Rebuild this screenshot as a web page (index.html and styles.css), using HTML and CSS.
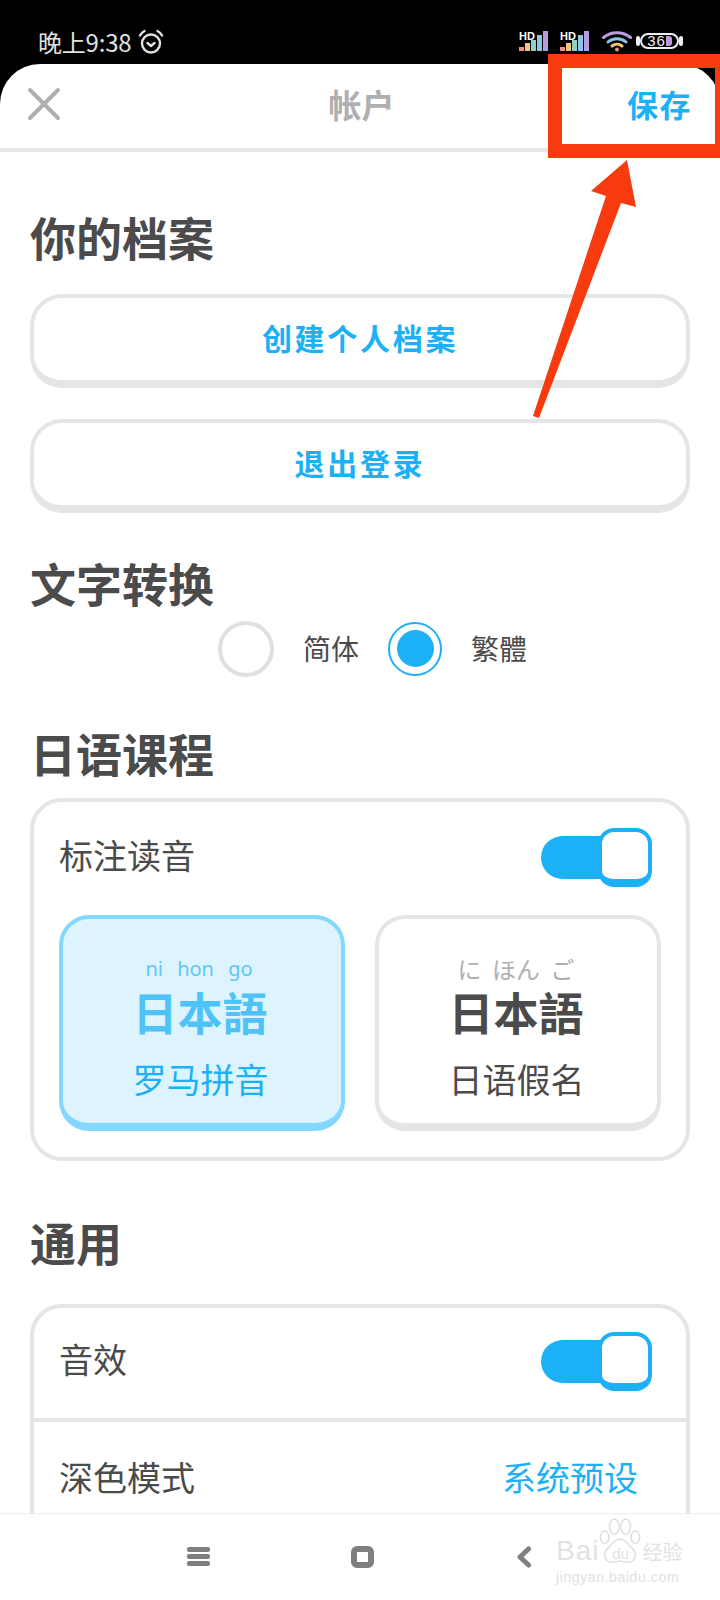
FILE: index.html
```html
<!DOCTYPE html>
<html lang="zh-CN">
<head>
<meta charset="utf-8">
<title>帐户</title>
<link rel="stylesheet" href="styles.css">
</head>
<body>
<div class="phone">
  <div class="statusbar">
    <div class="status-left">
      <span class="clock">晚上9:38</span>
      <svg class="alarm" width="26" height="26" viewBox="0 0 26 26" fill="none" stroke="#e0e0e0" stroke-width="2.4" stroke-linecap="round" stroke-linejoin="round"><circle cx="13" cy="14.5" r="9"/><path d="M9.5 14l3.5 3 3.5-3M2 6.5C3 4.500 4.500 3 6.500 2M24 6.500C23 4.500 21.500 3 19.500 2"/></svg>
    </div>
    <div class="status-right">
      <div class="signal">
        <span class="hd">HD</span>
        <svg width="30" height="22" viewBox="0 0 30 22"><rect x="0" y="17" width="5" height="4" fill="#f0937a"/><rect x="6" y="13" width="5" height="8" fill="#f3c27e"/><rect x="12" y="10" width="5" height="11" fill="#8fd0c0"/><rect x="18" y="5" width="5" height="16" fill="#8ec5e4"/><rect x="24" y="1" width="5" height="20" fill="#b79ddf"/></svg>
      </div>
      <div class="signal">
        <span class="hd">HD</span>
        <svg width="30" height="22" viewBox="0 0 30 22"><rect x="0" y="17" width="5" height="4" fill="#f0937a"/><rect x="6" y="13" width="5" height="8" fill="#f3c27e"/><rect x="12" y="10" width="5" height="11" fill="#8fd0c0"/><rect x="18" y="5" width="5" height="16" fill="#8ec5e4"/><rect x="24" y="1" width="5" height="20" fill="#b79ddf"/></svg>
      </div>
      <svg class="wifi" width="30" height="22" viewBox="0 0 30 22" fill="none" stroke-width="3" stroke-linecap="round"><path d="M1.500 7.500C9 1 21 1 28.500 7.500" stroke="#b79ddf"/><path d="M6 12C11 7.500 19 7.500 24 12" stroke="#8ec5e4"/><path d="M10 16c3-2.500 7-2.500 10 0" stroke="#f3c27e"/><circle cx="15" cy="19.500" r="2" fill="#f0937a" stroke="none"/></svg>
      <div class="battery">
        <span class="batt-nub"></span>
        <div class="batt-body"><span class="batt-num">36</span><span class="batt-level"></span></div>
        <span class="batt-nub"></span>
      </div>
    </div>
  </div>

  <div class="sheet">
    <header class="topbar">
      <svg class="close" width="34" height="34" viewBox="0 0 34 34" stroke="#afafaf" stroke-width="4" stroke-linecap="round"><path d="M3 3l28 28M31 3L3 31"/></svg>
      <div class="topbar-title">帐户</div>
      <div class="save">保存</div>
    </header>

    <main class="content">
      <h2 class="heading heading-first">你的档案</h2>
      <button class="btn">创建个人档案</button>
      <button class="btn btn-next">退出登录</button>

      <h2 class="heading heading-convert">文字转换</h2>
      <div class="radios">
        <span class="radio"></span>
        <span class="radio-text">简体</span>
        <span class="radio radio-on"><span class="radio-dot"></span></span>
        <span class="radio-text">繁體</span>
      </div>

      <h2 class="heading heading-course">日语课程</h2>
      <section class="card card-course">
        <div class="row">
          <span class="row-label">标注读音</span>
          <div class="toggle"><span class="toggle-track"></span><span class="toggle-knob"></span></div>
        </div>
        <div class="tiles">
          <div class="tile tile-on">
            <div class="ruby ruby-latin">ni hon go</div>
            <div class="word">日本語</div>
            <div class="tile-label">罗马拼音</div>
          </div>
          <div class="tile">
            <div class="ruby">に ほん ご</div>
            <div class="word">日本語</div>
            <div class="tile-label">日语假名</div>
          </div>
        </div>
      </section>

      <h2 class="heading heading-general">通用</h2>
      <section class="card card-open">
        <div class="row row-divided">
          <span class="row-label">音效</span>
          <div class="toggle"><span class="toggle-track"></span><span class="toggle-knob"></span></div>
        </div>
        <div class="row row-last">
          <span class="row-label">深色模式</span>
          <span class="row-value">系统预设</span>
        </div>
      </section>
    </main>
  </div>

  <nav class="navbar">
    <div class="nav-menu"><span></span><span></span><span></span></div>
    <div class="nav-home"></div>
    <svg class="nav-back" width="16" height="22" viewBox="0 0 16 22" fill="none" stroke="#7f7f7f" stroke-width="5" stroke-linecap="round" stroke-linejoin="round"><path d="M12.500 3L4 11l8.500 8"/></svg>
  </nav>

  <div class="watermark">
    <div class="wm-top">
      <span class="wm-brand">Bai</span>
      <div class="wm-logo">
        <svg class="wm-paw" width="42" height="50" viewBox="0 0 44 50" fill="none" stroke="#dddddd" stroke-width="1.500"><ellipse cx="16" cy="10" rx="5" ry="8"/><ellipse cx="28" cy="10" rx="5" ry="8"/><ellipse cx="6" cy="21" rx="4.500" ry="6.500"/><ellipse cx="38" cy="21" rx="4.500" ry="6.500"/><path d="M22 23c-7 0-8 6-13 10-6 5-2 15 5 14 4 0 6-1 8-1s4 1 8 1c7 1 11-9 5-14-5-4-6-10-13-10z"/></svg>
        <span class="wm-du">du</span>
      </div>
      <span class="wm-cn">经验</span>
    </div>
    <div class="wm-url">jingyan.baidu.com</div>
  </div>

  <div class="mark-box"></div>
  <svg class="mark-arrow" width="720" height="1600" viewBox="0 0 720 1600"><polygon points="627,160 636,207 621,203 539,418 533,416 606,196 591,191" fill="#f83a0f"/></svg>
</div>
</body>
</html>
```

FILE: styles.css
```css
* { box-sizing: border-box; }
html, body { margin: 0; padding: 0; background: #fff; }
body { font-family: "Noto Sans CJK SC", "Noto Sans", sans-serif; color: #4b4b4b; }

.phone { position: relative; width: 720px; height: 1600px; overflow: hidden; background: #000; display: flex; flex-direction: column; }

/* status bar */
.statusbar { height: 64px; flex: none; display: flex; justify-content: space-between; align-items: flex-start; padding: 29px 37px 0 38px; }
.status-left { display: flex; align-items: center; gap: 7px; }
.clock { color: #e0e0e0; font-size: 24px; line-height: 26px; letter-spacing: -0.2px; }
.status-right { display: flex; align-items: flex-start; gap: 10px; margin-top: 1px; }
.signal { position: relative; width: 31px; height: 22px; }
.hd { position: absolute; left: 0; top: 1px; color: #fff; font: 700 11px/11px "Liberation Sans", sans-serif; }
.wifi { margin-left: 1px; }
.battery { display: flex; align-items: center; margin: 3px 0 0 -6px; }
.batt-nub { width: 4px; height: 10px; background: #eee; border-radius: 2px; }
.batt-body { width: 39px; height: 16px; border: 2px solid #eee; border-radius: 8px; display: flex; align-items: center; justify-content: center; }
.batt-num { color: #eee; font: 400 15px/14px "Liberation Sans", sans-serif; letter-spacing: 1px; }
.batt-level { width: 6px; height: 10px; background: #b79ddf; border-radius: 0 3px 3px 0; }

/* sheet */
.sheet { flex: 1; min-height: 0; overflow: hidden; background: #fff; border-radius: 40px 40px 0 0; }
.topbar { height: 88px; border-bottom: 4px solid #e5e5e5; display: grid; grid-template-columns: 1fr auto 1fr; align-items: center; padding: 0 30px 4px 27px; }
.close { display: block; }
.topbar-title { color: #afafaf; font-size: 33px; font-weight: 700; line-height: 44px; padding-left: 6px; }
.save { justify-self: end; color: #1cb0f6; font-size: 31px; font-weight: 700; line-height: 44px; letter-spacing: 1.500px; margin-right: -2px; }

.content { padding: 0 30px; }
.heading { margin: 0; font-size: 46px; line-height: 52px; font-weight: 700; color: #4b4b4b; }
.heading-first { margin-top: 58px; }
.heading-convert { margin-top: 43px; }
.heading-course { margin-top: 49px; }
.heading-general { margin-top: 54px; }

.btn { display: block; width: 100%; height: 94px; margin-top: 32px; background: #fff; border: 4px solid #e5e5e5; border-bottom-width: 8px; border-radius: 32px; color: #1cb0f6; font-family: inherit; font-size: 30px; font-weight: 700; letter-spacing: 2.700px; padding: 0 0 4px; }
.btn-next { margin-top: 31px; }

/* radios */
.radios { display: flex; align-items: center; gap: 29px; margin: 12px 0 0 188px; height: 57px; }
.radio { width: 56px; height: 56px; flex: none; border: 4px solid #e0e0e0; border-radius: 50%; }
.radio-on { width: 54px; height: 54px; border: 2.500px solid #1cb0f6; display: flex; align-items: center; justify-content: center; }
.radio-dot { width: 37px; height: 37px; border-radius: 50%; background: #1cb0f6; }
.radio-text { font-size: 28px; line-height: 40px; margin-bottom: 2px; }

/* cards */
.card { border: 4px solid #e5e5e5; border-radius: 32px; margin-top: 37px; }
.card-course { margin-top: 20px; padding-bottom: 26px; }
.card-open { padding-bottom: 60px; }
.row { height: 110px; display: flex; justify-content: space-between; align-items: center; padding: 0 34px 0 25px; }
.row-divided { border-bottom: 4px solid #e5e5e5; height: 114px; padding-bottom: 4px; }
.row-last { height: 112px; padding-top: 2px; }
.row-label { font-size: 34px; line-height: 46px; margin-bottom: 4px; }
.row-value { font-size: 34px; line-height: 46px; color: #1cb0f6; margin: 0 14px 4px 0; }

.toggle { display: flex; align-items: flex-start; width: 111px; height: 59px; }
.toggle-track { width: 72px; height: 43px; margin-top: 8px; margin-right: -15px; background: #1cb0f6; border-radius: 22px 0 0 22px; }
.toggle-knob { width: 54px; height: 59px; background: #fff; border: 4px solid #1cb0f6; border-bottom-width: 8px; border-radius: 16px; position: relative; }

/* tiles */
.tiles { display: grid; grid-template-columns: 286px 286px; gap: 30px; padding: 3px 25px 0; }
.tile { height: 216px; border: 4px solid #e5e5e5; border-bottom-width: 8px; border-radius: 30px; padding-top: 35px; text-align: center; background: #fff; }
.tile-on { background: #ddf4ff; border-color: #84d8ff; }
.ruby { font-size: 24px; line-height: 30px; color: #afafaf; word-spacing: 5px; padding-right: 4px; }
.ruby-latin { font-family: "Noto Sans", sans-serif; font-size: 20px; color: #5fc7f5; word-spacing: 9px; padding-right: 6px; }
.word { margin-top: 0; font-size: 45px; line-height: 56px; font-weight: 700; color: #4b4b4b; padding-right: 4px; }
.tile-on .word { color: #4fc3f7; }
.tile-label { margin-top: 16px; font-size: 34px; line-height: 46px; color: #4b4b4b; padding-right: 3px; }
.tile-on .tile-label { color: #1cb0f6; }

/* nav bar */
.navbar { flex: none; height: 87px; background: #fff; border-top: 1px solid #ececec; padding: 33px 0 0; display: flex; align-items: flex-start; position: relative; }
.nav-menu { display: flex; flex-direction: column; gap: 2px; margin-left: 187px; width: 23px; }
.nav-menu span { display: block; height: 5px; background: #7f7f7f; border-radius: 2px; }
.nav-home { width: 23px; height: 22px; margin-left: 141px; margin-top: -1px; border: 6px solid #7f7f7f; border-radius: 6px; }
.nav-back { margin-left: 142px; margin-top: -1px; }

/* watermark */
.watermark { position: absolute; left: 556px; top: 1522px; width: 130px; color: #e2e2e2; }
.wm-top { display: flex; align-items: flex-end; height: 44px; }
.wm-brand { font: 400 28px/30px "Liberation Sans", sans-serif; letter-spacing: 1px; }
.wm-logo { position: relative; width: 42px; height: 50px; flex: none; }
.wm-paw { display: block; }
.wm-du { position: absolute; left: 0; right: 0; bottom: 3px; text-align: center; font: 400 15px/18px "Liberation Sans", sans-serif; }
.wm-cn { font-size: 20px; line-height: 28px; margin-left: 1px; white-space: nowrap; }
.wm-url { font: 400 14px/16px "Liberation Sans", sans-serif; margin-top: 3px; letter-spacing: 0.600px; white-space: nowrap; }

/* annotations */
.mark-box { position: absolute; left: 548px; top: 54px; width: 172px; height: 104px; border: solid #f83a0f; border-width: 14px 5px 14px 14px; }
.mark-arrow { position: absolute; left: 0; top: 0; pointer-events: none; }
```
